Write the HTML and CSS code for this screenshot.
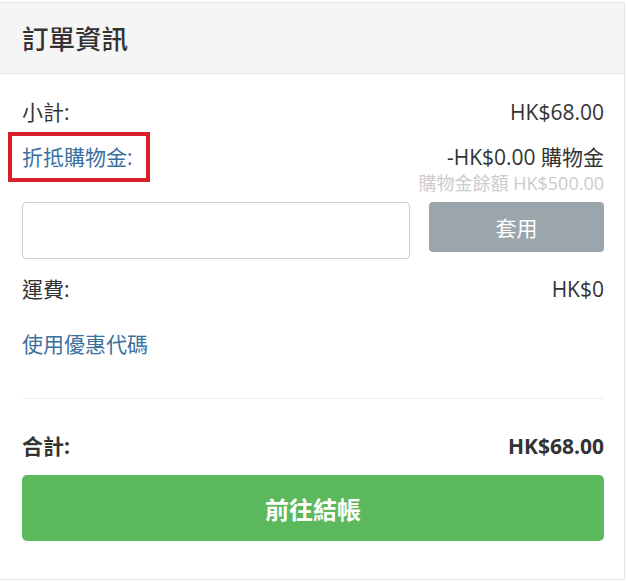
FILE: index.html
```html
<!DOCTYPE html>
<html lang="zh-Hant">
<head>
<meta charset="utf-8">
<title>訂單資訊</title>
<link rel="stylesheet" href="styles.css">
</head>
<body>
<div class="panel">
  <div class="panel-head"><h2 class="title">訂單資訊</h2></div>
  <div class="panel-body">
    <div class="row">
      <span class="label">小計:</span>
      <span class="value">HK$68.00</span>
    </div>
    <div class="row credit">
      <span class="label link highlight">折抵購物金:</span>
      <div class="value-stack">
        <span class="value">-HK$0.00 購物金</span>
        <span class="balance">購物金餘額 HK$500.00</span>
      </div>
    </div>
    <div class="apply">
      <input class="apply-input" type="text">
      <button class="apply-btn" type="button">套用</button>
    </div>
    <div class="row shipping">
      <span class="label">運費:</span>
      <span class="value">HK$0</span>
    </div>
    <div class="row coupon">
      <span class="label link">使用優惠代碼</span>
    </div>
    <hr class="divider">
    <div class="row total">
      <span class="label">合計:</span>
      <span class="value">HK$68.00</span>
    </div>
    <button class="checkout" type="button">前往結帳</button>
  </div>
</div>
</body>
</html>
```
FILE: styles.css
```css
html, body {
  margin: 0;
  padding: 0;
  background: #fff;
}
body {
  font-family: "Open Sans", "Noto Sans CJK TC", sans-serif;
  color: #333;
}
.panel {
  margin: 2px 3px 0 0;
  border: 1px solid #e6e6e6;
  border-left: none;
  height: 578px;
  box-sizing: border-box;
}
.panel-head {
  background: #f5f5f5;
  border-bottom: 1px solid #e6e6e6;
  height: 70px;
  display: flex;
  align-items: center;
  padding: 0 22px;
}
.title {
  margin: 0 0 1px;
  font-size: 26.5px;
  font-weight: 500;
  color: #333;
}
.panel-body {
  padding: 23px 20px 0 22px;
  display: flex;
  flex-direction: column;
}
.row {
  display: flex;
  justify-content: space-between;
  align-items: flex-start;
  font-size: 21px;
  line-height: 30px;
}
.credit {
  margin-top: 15px;
  position: relative;
}
.value-stack {
  display: flex;
  flex-direction: column;
  align-items: flex-end;
}
.balance {
  font-size: 18px;
  line-height: 22px;
  color: #cbcbcb;
}
.link {
  color: #3c6fa0;
}
.highlight {
  position: relative;
}
.highlight::after {
  content: "";
  position: absolute;
  left: -14px;
  top: -10px;
  width: 142px;
  height: 50px;
  box-sizing: border-box;
  border: 4px solid #d7202a;
}
.apply {
  display: flex;
  gap: 19px;
  align-items: flex-start;
  margin-top: 8px;
}
.apply-input {
  flex: 1;
  height: 57px;
  box-sizing: border-box;
  border: 1px solid #cccccc;
  border-radius: 4px;
  margin: 0;
}
.apply-btn {
  width: 175px;
  height: 50px;
  border: none;
  border-radius: 4px;
  background: #9aa6ab;
  color: #fff;
  font-family: "Open Sans", "Noto Sans CJK TC", sans-serif;
  font-size: 21px;
  margin: 0;
}
.shipping {
  margin-top: 15px;
}
.coupon {
  margin-top: 25px;
}
.divider {
  margin: 39px 0 0;
  border: none;
  border-top: 1px solid #eeeeee;
  height: 0;
}
.total {
  margin-top: 32px;
  font-weight: 700;
}
.checkout {
  margin-top: 14px;
  height: 66px;
  border: none;
  border-radius: 5px;
  background: #5cb85c;
  color: #fff;
  font-family: "Open Sans", "Noto Sans CJK TC", sans-serif;
  font-size: 24px;
  font-weight: 700;
}
```
